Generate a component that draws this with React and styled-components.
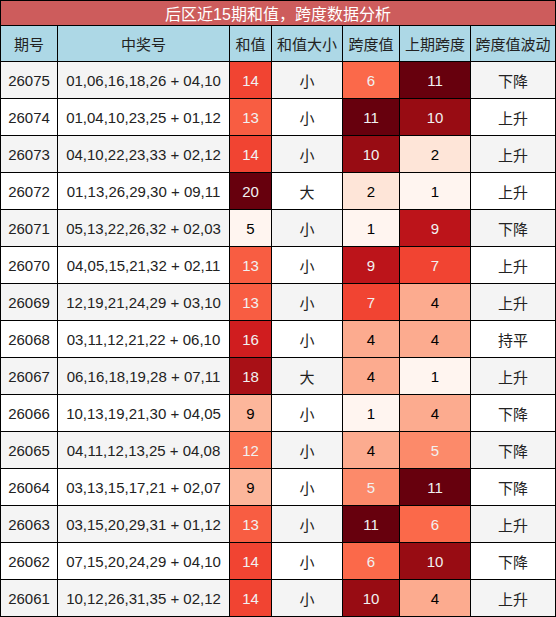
import React from "react";
import styled, { createGlobalStyle } from "styled-components";

const GlobalStyle = createGlobalStyle`
  html, body {
    margin: 0;
    padding: 0;
    background: #fff;
  }
  body {
    font-family: "Liberation Sans", "Noto Sans CJK SC", Arial, sans-serif;
  }
`;

const Grid = styled.div`
  display: grid;
  grid-template-columns: 56px 171px 41px 70px 56px 70px 84px;
  grid-template-rows: 24px 35px repeat(15, 36px);
  gap: 1px;
  padding: 1px;
  width: 556px;
  box-sizing: border-box;
  background: #000;
`;

const Title = styled.div`
  grid-column: 1 / -1;
  background: #cd5c5c;
  color: #fff;
  font-size: 16px;
  display: flex;
  align-items: center;
  justify-content: center;
`;

const Head = styled.div`
  background: #add8e6;
  color: #222;
  font-size: 15px;
  display: flex;
  align-items: center;
  justify-content: center;
`;

const Cell = styled.div`
  background: ${(p) => p.$bg || (p.$odd ? "#fff" : "#f4f4f4")};
  color: ${(p) => p.$fg || "#222"};
  font-size: 15px;
  display: flex;
  align-items: center;
  justify-content: center;
  white-space: nowrap;
`;

const rows = [
  ["26075", "01,06,16,18,26 + 04,10", 14, "小", 6, 11, "下降"],
  ["26074", "01,04,10,23,25 + 01,12", 13, "小", 11, 10, "上升"],
  ["26073", "04,10,22,23,33 + 02,12", 14, "小", 10, 2, "上升"],
  ["26072", "01,13,26,29,30 + 09,11", 20, "大", 2, 1, "上升"],
  ["26071", "05,13,22,26,32 + 02,03", 5, "小", 1, 9, "下降"],
  ["26070", "04,05,15,21,32 + 02,11", 13, "小", 9, 7, "上升"],
  ["26069", "12,19,21,24,29 + 03,10", 13, "小", 7, 4, "上升"],
  ["26068", "03,11,12,21,22 + 06,10", 16, "小", 4, 4, "持平"],
  ["26067", "06,16,18,19,28 + 07,11", 18, "大", 4, 1, "上升"],
  ["26066", "10,13,19,21,30 + 04,05", 9, "小", 1, 4, "下降"],
  ["26065", "04,11,12,13,25 + 04,08", 12, "小", 4, 5, "下降"],
  ["26064", "03,13,15,17,21 + 02,07", 9, "小", 5, 11, "下降"],
  ["26063", "03,15,20,29,31 + 01,12", 13, "小", 11, 6, "上升"],
  ["26062", "07,15,20,24,29 + 04,10", 14, "小", 6, 10, "下降"],
  ["26061", "10,12,26,31,35 + 02,12", 14, "小", 10, 4, "上升"],
];

const heads = ["期号", "中奖号", "和值", "和值大小", "跨度值", "上期跨度", "跨度值波动"];

// matplotlib "Reds"
const reds = [
  [255, 245, 240], [254, 224, 210], [252, 187, 161], [252, 146, 114],
  [251, 106, 74], [239, 59, 44], [203, 24, 29], [165, 15, 21], [103, 0, 13],
];

const shade = (v, min, max) => {
  const t = (v - min) / (max - min);
  const q = Math.min(255, Math.floor(t * 256)) / 255;
  const pos = q * 8;
  const i = Math.min(7, Math.floor(pos));
  const f = pos - i;
  const c = reds[i].map((a, k) => Math.round(a + (reds[i + 1][k] - a) * f));
  const lin = c.map((x) => {
    const s = x / 255;
    return s <= 0.04045 ? s / 12.92 : Math.pow((s + 0.055) / 1.055, 2.4);
  });
  const lum = 0.2126 * lin[0] + 0.7152 * lin[1] + 0.0722 * lin[2];
  return { bg: `rgb(${c.join(",")})`, fg: lum < 0.408 ? "#f1f1f1" : "#000" };
};

const range = (idx) => {
  const vals = rows.map((r) => r[idx]);
  return [Math.min(...vals), Math.max(...vals)];
};

const Heat = ({ value, span }) => {
  const s = shade(value, span[0], span[1]);
  return (
    <Cell $bg={s.bg} $fg={s.fg}>
      {value}
    </Cell>
  );
};

const App = () => {
  const sumSpan = range(2);
  const spanSpan = range(4);
  const prevSpan = range(5);
  return (
    <>
      <GlobalStyle />
      <Grid>
        <Title>后区近15期和值，跨度数据分析</Title>
        {heads.map((h) => (
          <Head key={h}>{h}</Head>
        ))}
        {rows.map((r, i) => (
          <React.Fragment key={r[0]}>
            <Cell $odd={i % 2 === 1}>{r[0]}</Cell>
            <Cell $odd={i % 2 === 1}>{r[1]}</Cell>
            <Heat value={r[2]} span={sumSpan} />
            <Cell $odd={i % 2 === 1}>{r[3]}</Cell>
            <Heat value={r[4]} span={spanSpan} />
            <Heat value={r[5]} span={prevSpan} />
            <Cell $odd={i % 2 === 1}>{r[6]}</Cell>
          </React.Fragment>
        ))}
      </Grid>
    </>
  );
};

export default App;
